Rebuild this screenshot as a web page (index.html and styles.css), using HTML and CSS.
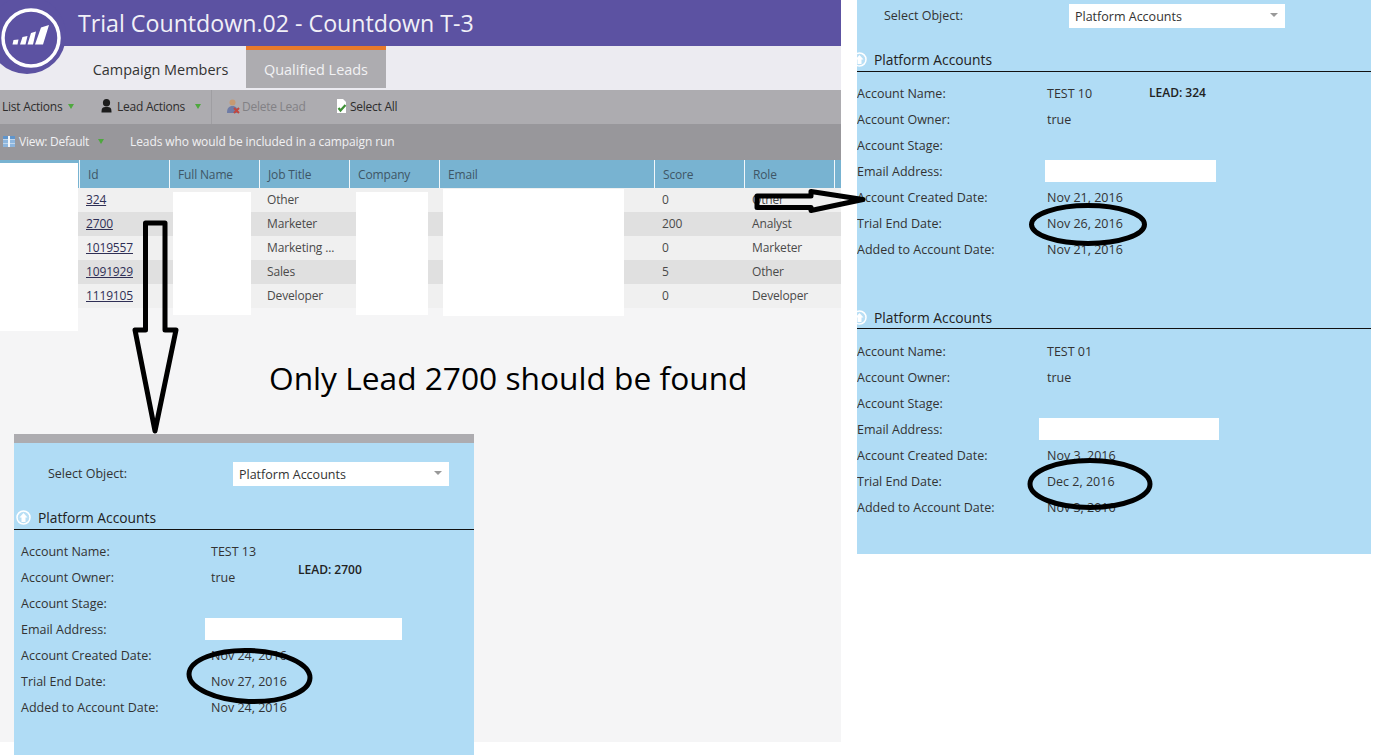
FILE: index.html
```html
<!DOCTYPE html>
<html lang="en">
<head>
<meta charset="utf-8">
<title>Trial Countdown.02 - Countdown T-3</title>
<link rel="stylesheet" href="styles.css">
</head>
<body>
<div class="stage">
  <main class="app">
    <header class="titlebar">
      <svg class="logo" viewBox="0 0 70 78" width="70" height="78" aria-hidden="true">
        <circle cx="27" cy="35" r="39" fill="#5c52a2"/>
        <circle cx="31" cy="38" r="28" fill="none" stroke="#fff" stroke-width="3.500"/>
        <path fill="#fff" d="M13.500 40L18.500 39.500L17.500 44.500H12.500ZM22.500 37L27.500 36L25.500 44.500H20ZM31 33L36 31.500L33 44.500H27.500ZM41 27.500L49 25L43 44.500H35Z"/>
      </svg>
      <h1 class="title">Trial Countdown.02 - Countdown T-3</h1>
    </header>
    <nav class="tabs">
      <a class="tab">Campaign Members</a>
      <a class="tab tab-active">Qualified Leads</a>
    </nav>
    <div class="toolbar">
      <span class="tool tool-list">List Actions<i class="caret"></i></span>
      <span class="tool tool-lead">
        <svg class="ico" width="11" height="14" viewBox="0 0 11 14" aria-hidden="true"><ellipse cx="5.500" cy="3.800" rx="3.600" ry="3.800" fill="#1c1c1c"/><path d="M.5 13.500c0-4.500.8-5.500 5-5.500s5 1 5 5.500z" fill="#1c1c1c"/></svg>
        Lead Actions<i class="caret caret-lead"></i>
      </span>
      <span class="tool tool-delete">
        <svg class="ico" width="13" height="15" viewBox="0 0 13 15" aria-hidden="true"><circle cx="5.500" cy="3.500" r="3" fill="#c69a72"/><path d="M0 14c0-5 2-7 5.500-7s5.500 2 5.500 7z" fill="#6f7ca6"/><path d="M7 9l5 5M12 9l-5 5" stroke="#c2473f" stroke-width="2"/></svg>
        Delete Lead
      </span>
      <span class="tool tool-select">
        <svg class="ico" width="11" height="14" viewBox="0 0 11 14" aria-hidden="true"><path d="M1 0h6l3 3v11H1z" fill="#fff"/><path d="M2.500 9l2 2.500 5-5.500" fill="none" stroke="#3d8f35" stroke-width="2.200"/></svg>
        Select All
      </span>
    </div>
    <div class="viewbar">
      <svg class="ico ico-view" width="12" height="11" viewBox="0 0 12 11" aria-hidden="true"><path fill="#f2f6fa" d="M0 0h12v11H0z"/><path fill="#5f95cc" d="M0 0h5v3H0zM7 0h5v3H7z"/><path fill="#8db6de" d="M0 3.500h5V7H0zM7 3.500h5V7H7zM0 7.500h5V11H0zM7 7.500h5V11H7z"/></svg>
      <span class="view-name">View: Default</span><i class="caret caret-view"></i>
      <span class="view-note">Leads who would be included in a campaign run</span>
    </div>
    <div class="grid">
      <div class="row head">
        <span></span><span class="sep">Id</span><span class="sep">Full Name</span><span class="sep">Job Title</span><span class="sep">Company</span><span class="sep">Email</span><span class="sep">Score</span><span class="sep">Role</span><span class="sep"></span>
      </div>
      <div class="row odd"><span></span><span class="id"><u>324</u></span><span></span><span class="cell">Other</span><span></span><span></span><span class="cell">0</span><span class="cell">Other</span><span></span></div>
      <div class="row even"><span></span><span class="id"><u>2700</u></span><span></span><span class="cell">Marketer</span><span></span><span></span><span class="cell">200</span><span class="cell">Analyst</span><span></span></div>
      <div class="row odd"><span></span><span class="id"><u>1019557</u></span><span></span><span class="cell">Marketing ...</span><span></span><span></span><span class="cell">0</span><span class="cell">Marketer</span><span></span></div>
      <div class="row even"><span></span><span class="id"><u>1091929</u></span><span></span><span class="cell">Sales</span><span></span><span></span><span class="cell">5</span><span class="cell">Other</span><span></span></div>
      <div class="row odd"><span></span><span class="id"><u>1119105</u></span><span></span><span class="cell">Developer</span><span></span><span></span><span class="cell">0</span><span class="cell">Developer</span><span></span></div>
    </div>
  </main>

  <div class="redact r-left"></div>
  <div class="redact r-name"></div>
  <div class="redact r-company"></div>
  <div class="redact r-email"></div>

  <p class="note">Only Lead 2700 should be found</p>

  <section class="panel panel-left">
    <div class="select-row">
      <span class="select-label">Select Object:</span>
      <span class="select">Platform Accounts<i class="select-caret"></i></span>
    </div>
    <div class="block">
      <h2 class="block-head"><svg class="up" width="15" height="15" viewBox="0 0 15 15" aria-hidden="true"><circle cx="7.500" cy="7.500" r="6.500" fill="#b9dff5" stroke="#fff" stroke-width="1.500"/><path d="M7.500 3l4 4.500H9.500V12h-4V7.500H3.500z" fill="#fff"/></svg>Platform Accounts</h2>
      <dl class="fields">
        <dt>Account Name:</dt><dd>TEST 13</dd>
        <dt>Account Owner:</dt><dd>true</dd>
        <dt>Account Stage:</dt><dd></dd>
        <dt>Email Address:</dt><dd><span class="blank blank-l"></span></dd>
        <dt>Account Created Date:</dt><dd>Nov 24, 2016</dd>
        <dt>Trial End Date:</dt><dd>Nov 27, 2016</dd>
        <dt>Added to Account Date:</dt><dd>Nov 24, 2016</dd>
      </dl>
      <strong class="lead lead-l">LEAD: 2700</strong>
    </div>
  </section>

  <section class="panel panel-right">
    <div class="select-row">
      <span class="select-label">Select Object:</span>
      <span class="select">Platform Accounts<i class="select-caret"></i></span>
    </div>
    <div class="block">
      <h2 class="block-head"><svg class="up" width="15" height="15" viewBox="0 0 15 15" aria-hidden="true"><circle cx="7.500" cy="7.500" r="6.500" fill="#b9dff5" stroke="#fff" stroke-width="1.500"/><path d="M7.500 3l4 4.500H9.500V12h-4V7.500H3.500z" fill="#fff"/></svg>Platform Accounts</h2>
      <dl class="fields">
        <dt>Account Name:</dt><dd>TEST 10</dd>
        <dt>Account Owner:</dt><dd>true</dd>
        <dt>Account Stage:</dt><dd></dd>
        <dt>Email Address:</dt><dd><span class="blank blank-r1"></span></dd>
        <dt>Account Created Date:</dt><dd>Nov 21, 2016</dd>
        <dt>Trial End Date:</dt><dd>Nov 26, 2016</dd>
        <dt>Added to Account Date:</dt><dd>Nov 21, 2016</dd>
      </dl>
      <strong class="lead lead-r">LEAD: 324</strong>
    </div>
    <div class="block block-second">
      <h2 class="block-head"><svg class="up" width="15" height="15" viewBox="0 0 15 15" aria-hidden="true"><circle cx="7.500" cy="7.500" r="6.500" fill="#b9dff5" stroke="#fff" stroke-width="1.500"/><path d="M7.500 3l4 4.500H9.500V12h-4V7.500H3.500z" fill="#fff"/></svg>Platform Accounts</h2>
      <dl class="fields">
        <dt>Account Name:</dt><dd>TEST 01</dd>
        <dt>Account Owner:</dt><dd>true</dd>
        <dt>Account Stage:</dt><dd></dd>
        <dt>Email Address:</dt><dd><span class="blank blank-r2"></span></dd>
        <dt>Account Created Date:</dt><dd>Nov 3, 2016</dd>
        <dt>Trial End Date:</dt><dd>Dec 2, 2016</dd>
        <dt>Added to Account Date:</dt><dd>Nov 3, 2016</dd>
      </dl>
    </div>
  </section>

  <svg class="marks" width="1373" height="755" viewBox="0 0 1373 755" aria-hidden="true">
    <path class="mark" d="M145.500 223H165V330H176L155 431L135 330H145.500Z"/>
    <path class="mark" d="M757 196H811V191.500L863 199.500L811 210.500V207.500H757Z"/>
    <ellipse class="mark" cx="249.500" cy="676" rx="60.500" ry="25.500" transform="rotate(2 249.500 676)"/>
    <ellipse class="mark" cx="1088" cy="224.500" rx="56.500" ry="19"/>
    <ellipse class="mark" cx="1090" cy="484" rx="60" ry="23.500"/>
  </svg>
</div>
</body>
</html>
```

FILE: styles.css
```css
* { box-sizing: border-box; }
html, body { margin: 0; padding: 0; background: #fff; }
body { font-family: "Open Sans", "Liberation Sans", sans-serif; font-size: 12px; color: #3a3a3a; }
.stage { position: relative; width: 1373px; height: 755px; overflow: hidden; }

.app { width: 841px; height: 742px; background: #f5f5f6; }

.titlebar { position: relative; height: 46px; background: #5c52a2; padding-left: 78px; display: flex; align-items: center; }
.logo { position: absolute; left: 0; top: 0; }
.title { margin: 0; font-size: 23.200px; font-weight: 400; color: #f1f0f7; white-space: nowrap; }

.tabs { height: 44px; background: #ecebf1; display: flex; padding-left: 75px; }
.tab { width: 171px; height: 42px; padding-top: 4px; display: flex; align-items: center; justify-content: center; font-size: 14.450px; color: #333; }
.tab-active { width: 140px; background: #adacb0; border-top: 4px solid #e8792b; padding-top: 0; color: #f2f2f4; }

.toolbar { height: 34px; background: #adacb0; display: flex; align-items: center; color: #2d2d2d; }
.tool { display: flex; align-items: center; white-space: nowrap; height: 100%; padding-bottom: 2px; letter-spacing: -.25px; }
.ico { flex: none; margin-right: 4px; }
.tool-list { width: 101px; padding-left: 2px; }
.tool-lead { width: 111px; border-right: 1px solid #9f9ea2; }
.tool-lead .ico { margin-right: 5px; }
.tool-delete { margin-left: 15px; width: 109px; color: #828185; }
.tool-delete .ico { margin-right: 2px; }
.tool-select .ico { margin-right: 3px; }
.caret { display: inline-block; width: 0; height: 0; margin-left: 6px; border: 3.500px solid transparent; border-top: 5px solid #4ea83e; border-bottom: 0; }
.caret-lead { margin-left: 10px; }
.caret-view { margin-left: 9px; }

.viewbar { height: 36px; background: #98979b; display: flex; align-items: center; padding-left: 3px; padding-bottom: 2px; color: #f0f0f2; letter-spacing: -.25px; white-space: nowrap; }
.view-note { margin-left: 26px; letter-spacing: -.1px; }

.row { display: grid; grid-template-columns: 79px 90px 90px 90px 90px 215px 90px 90px 7px; height: 24px; align-items: center; padding-bottom: 2px; letter-spacing: -.15px; }
.head { height: 28px; padding-bottom: 0; background: #78b3d1; color: #3e5666; align-items: stretch; }
.sep { border-left: 1px solid #f2f7fa; padding-left: 8px; display: flex; align-items: center; }
.odd { background: #f0f0f0; }
.even { background: #e0e0e0; }
.id { padding-left: 7px; color: #2f2f55; }
.cell { padding-left: 8px; white-space: nowrap; color: #4a4a4a; }

.redact { position: absolute; background: #fff; }
.r-left { left: 0; top: 163px; width: 78px; height: 168px; }
.r-name { left: 173px; top: 192px; width: 78px; height: 123px; }
.r-company { left: 356px; top: 192px; width: 72px; height: 123px; }
.r-email { left: 443px; top: 189px; width: 181px; height: 127px; }

.note { position: absolute; left: 269px; top: 356px; margin: 0; font-size: 31.700px; line-height: 44px; color: #000; white-space: nowrap; }

.panel { position: absolute; overflow: hidden; background: #b0dcf5; font-size: 12.500px; }
.panel-left { left: 14px; top: 434px; width: 460px; height: 321px; border-top: 9px solid #adacb0; padding-top: 19px; }
.panel-right { left: 857px; top: 0; width: 514px; height: 554px; padding-top: 4px; }

.select-row { display: flex; align-items: center; height: 24px; padding-left: 34px; }
.panel-right .select-row { padding-left: 27px; }
.select-label { width: 185px; padding-bottom: 2px; color: #333; }
.select { position: relative; width: 216px; height: 24px; padding-left: 6px; background: #fff; display: flex; align-items: center; color: #333; }
.select-caret { position: absolute; right: 7px; top: 9px; border: 4px solid transparent; border-top: 4px solid #999; border-bottom: 0; }

.block { position: relative; margin-top: 20px; }
.panel-right .block-second { margin-top: 44px; }
.block-head { position: relative; margin: 0; height: 24px; padding-left: 24px; border-bottom: 1px solid #111; font-size: 13.800px; font-weight: 400; color: #222; display: flex; align-items: center; }
.up { position: absolute; left: 2px; top: 4px; }
.panel-right .block-head { padding-left: 17px; }
.panel-right .up { left: -5px; top: 4px; }
.block-second .block-head { height: 23px; }
.block-second .fields { margin-top: 9px; }

.fields { margin: 8px 0 0; display: grid; grid-template-columns: 190px 1fr; grid-auto-rows: 26px; align-items: center; padding-left: 7px; }
.panel-right .fields { padding-left: 0; }
.fields dt, .fields dd { margin: 0; white-space: nowrap; color: #333; }
.blank { display: block; background: #fff; height: 22px; }
.blank-l { width: 197px; margin-left: -6px; }
.blank-r1 { width: 171px; margin-left: -2px; }
.blank-r2 { width: 180px; margin-left: -8px; }

.lead { position: absolute; font-size: 12px; font-weight: 600; color: #222; white-space: nowrap; }
.lead-l { left: 284px; top: 55px; }
.lead-r { left: 292px; top: 36px; }

.marks { position: absolute; left: 0; top: 0; pointer-events: none; }
.mark { fill: none; stroke: #000; stroke-width: 5; stroke-linejoin: round; }
```
